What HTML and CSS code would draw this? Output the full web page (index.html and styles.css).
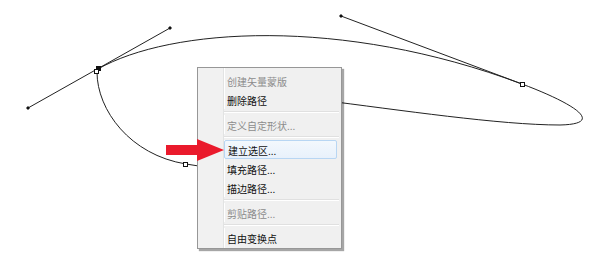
FILE: index.html
```html
<!DOCTYPE html>
<html>
<head>
<meta charset="utf-8">
<link rel="stylesheet" href="styles.css">
</head>
<body>
<div class="canvas">
  <svg class="paths" width="600" height="262" viewBox="0 0 600 262">
    <g fill="none" stroke="#222" stroke-width="1">
      <path d="M98 69 C170 28 341 16 522 84 C575 104 606 124 560 125 C500 125 400 110 320 100"/>
      <path d="M97 72 C97 110 130 155 186 164 L205 167"/>
      <line x1="28" y1="108" x2="170" y2="28"/>
      <line x1="341" y1="16" x2="522" y2="84"/>
    </g>
    <g fill="#111">
      <polygon points="28,106 30,108 28,110 26,108"/>
      <polygon points="170,26 172,28 170,30 168,28"/>
      <polygon points="341,14 343,16 341,18 339,16"/>
      <rect x="96" y="66" width="5" height="5"/>
    </g>
    <g fill="#fff" stroke="#111" stroke-width="1">
      <rect x="94.5" y="69.5" width="4" height="4"/>
      <rect x="183.5" y="162.5" width="4" height="4"/>
      <rect x="520.5" y="82.5" width="4" height="4"/>
    </g>
  </svg>

  <div class="menu">
    <div class="item disabled">创建矢量蒙版</div>
    <div class="item">删除路径</div>
    <div class="sep"></div>
    <div class="item disabled">定义自定形状...</div>
    <div class="sep"></div>
    <div class="item hover">建立选区...</div>
    <div class="item">填充路径...</div>
    <div class="item">描边路径...</div>
    <div class="sep"></div>
    <div class="item disabled">剪贴路径...</div>
    <div class="sep"></div>
    <div class="item">自由变换点</div>
  </div>

  <svg class="arrow" width="600" height="262" viewBox="0 0 600 262">
    <polygon fill="#ea1a2c" points="166,145 197,145 197,139 224,150 197,161 197,155 166,155"/>
  </svg>
</div>
</body>
</html>
```

FILE: styles.css
```css
html, body {
  margin: 0;
  padding: 0;
  background: #fff;
}
.canvas {
  position: relative;
  width: 600px;
  height: 262px;
  overflow: hidden;
  background: #fff;
}
.paths, .arrow {
  position: absolute;
  left: 0;
  top: 0;
}
.menu {
  position: absolute;
  left: 197px;
  top: 67px;
  width: 143px;
  padding: 3px 0 1px 0;
  background: #f0f0f0 linear-gradient(to right, #f1f1f1 0, #f1f1f1 25px, #e2e3e3 25px, #e2e3e3 26px, #ffffff 26px, #ffffff 27px, #f0f0f0 27px);
  border: 1px solid #979797;
  box-shadow: 2px 2px 1px rgba(0, 0, 0, 0.35);
  font-family: "Noto Sans CJK SC", "Noto Sans", sans-serif;
  font-size: 10px;
  color: #111;
}
.item {
  height: 19px;
  line-height: 19px;
  margin: 0 4px 0 25px;
  padding-left: 4px;
  border: 1px solid transparent;
  border-left: 0;
  border-right: 0;
  box-sizing: border-box;
  white-space: nowrap;
}
.item.disabled {
  color: #8c8c8c;
}
.item.hover {
  margin-left: 26px;
  padding-left: 3px;
  border: 1px solid #b8d6f3;
  border-radius: 2px;
  background: linear-gradient(#f3f8fd, #e8f1fb);
}
.sep {
  height: 6px;
  margin: 0 2px 0 26px;
  background: linear-gradient(#f0f0f0 0, #f0f0f0 2px, #e0e0e0 2px, #e0e0e0 3px, #ffffff 3px, #ffffff 4px, #f0f0f0 4px);
}
```
